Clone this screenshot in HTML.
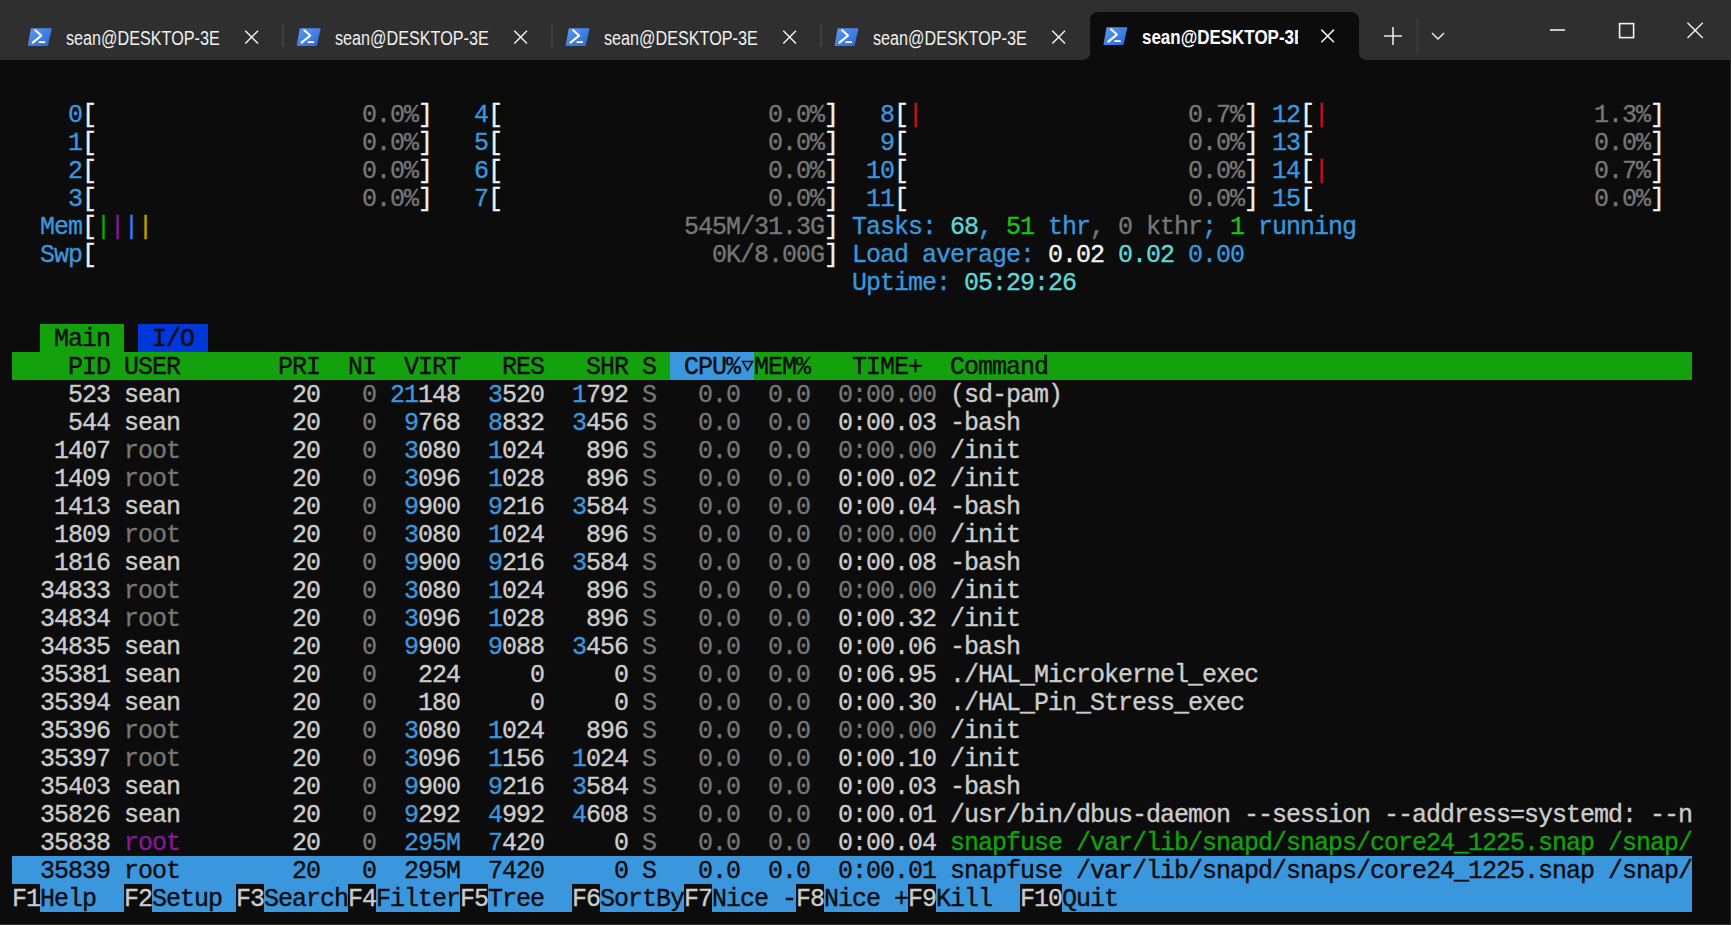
<!DOCTYPE html>
<html><head><meta charset="utf-8">
<style>
html,body{margin:0;padding:0;width:1731px;height:925px;overflow:hidden;background:#0c0c0c;}
#bar{position:absolute;left:0;top:0;width:1731px;height:60px;background:#2f2f2f;}
.ico{position:absolute;top:27px;width:26px;height:20px;}
.tt{position:absolute;top:24px;height:28px;line-height:28px;font-family:"Liberation Sans",sans-serif;font-size:19.5px;color:#f0f0f0;white-space:pre;transform:scaleX(0.83);transform-origin:0 0;}
.x{position:absolute;}
.sep{position:absolute;top:24px;width:2px;height:23px;background:#3f3f3f;}
#active{position:absolute;left:1090px;top:12px;width:269px;height:48px;background:#0c0c0c;border-radius:8px 8px 0 0;}
.f{position:absolute;height:28px;}
.t{position:absolute;height:28px;line-height:28px;font-family:"Liberation Mono",monospace;font-size:25.000px;letter-spacing:-1.0023px;white-space:pre;-webkit-text-stroke:0.35px currentColor;}
</style></head><body>
<div id="bar"></div>
<div id="active"></div>
<svg width="1731" height="60" style="position:absolute;left:0;top:0">
  <defs>
    <linearGradient id="pg" x1="0" y1="0" x2="1" y2="1">
      <stop offset="0" stop-color="#5b9bf5"/><stop offset="1" stop-color="#2a66d3"/>
    </linearGradient>
    <g id="psicon">
      <path d="M3.8 0.2 H23.6 Q24.2 0.2 24 0.9 L20.3 17.3 Q20.1 18 19.4 18 H0.7 Q0 18 0.2 17.3 L3.1 0.9 Q3.2 0.2 3.8 0.2 Z" fill="url(#pg)"/>
      <path d="M7.7 2.2 L13.6 7.6 L5 14.6" fill="none" stroke="#fff" stroke-width="2" stroke-linecap="round" stroke-linejoin="round"/>
      <path d="M11.8 14.1 H16.8" fill="none" stroke="#fff" stroke-width="1.8" stroke-linecap="round"/>
    </g>
    <g id="xic">
      <path d="M0.3 0.3 L13 13 M13 0.3 L0.3 13" stroke="#f0f0f0" stroke-width="1.5" fill="none"/>
    </g>
  </defs>
  <path d="M1082 60 Q1090 60 1090 52 L1090 60 Z" fill="#0c0c0c"/>
  <path d="M1367 60 Q1359 60 1359 52 L1359 60 Z" fill="#0c0c0c"/>
  <use href="#psicon" x="27.7" y="28"/>
  <use href="#psicon" x="296.6" y="28"/>
  <use href="#psicon" x="565.5" y="28"/>
  <use href="#psicon" x="834.4" y="28"/>
  <use href="#psicon" x="1103.3" y="27"/>
  <use href="#xic" x="245" y="30.5"/>
  <use href="#xic" x="514" y="30.5"/>
  <use href="#xic" x="783" y="30.5"/>
  <use href="#xic" x="1052" y="30.5"/>
  <use href="#xic" x="1321" y="29.3"/>
  <path d="M1393 27 V45 M1384 36 H1402" stroke="#e8e8e8" stroke-width="1.6" fill="none"/>
  <rect x="1416.6" y="18" width="1.8" height="35" fill="#3f3f3f"/>
  <path d="M1432 33 L1438 39 L1444 33" stroke="#e8e8e8" stroke-width="1.5" fill="none"/>
  <path d="M1550 30 H1565" stroke="#f0f0f0" stroke-width="1.6" fill="none"/>
  <rect x="1619.6" y="23.6" width="14" height="14" stroke="#f0f0f0" stroke-width="1.6" fill="none"/>
  <path d="M1687.5 22.7 L1702.8 38 M1702.8 22.7 L1687.5 38" stroke="#f0f0f0" stroke-width="1.4" fill="none"/>
</svg>
<div class="sep" style="left:282px"></div>
<div class="sep" style="left:551px"></div>
<div class="sep" style="left:820px"></div>
<div class="tt" style="left:66px">sean@DESKTOP-3E</div>
<div class="tt" style="left:335px">sean@DESKTOP-3E</div>
<div class="tt" style="left:604px">sean@DESKTOP-3E</div>
<div class="tt" style="left:873px">sean@DESKTOP-3E</div>
<div style="position:absolute;left:1142px;top:0;width:156px;height:60px;overflow:hidden"><div class="tt" style="left:0;top:23px;font-weight:bold;color:#fff;transform:scaleX(0.87)">sean@DESKTOP-3E</div></div>
<div class="f" style="top:324px;left:40px;width:84px;background:#13a10e"></div>
<div class="f" style="top:324px;left:138px;width:70px;background:#0037da"></div>
<div class="f" style="top:352px;left:12px;width:1680px;background:#13a10e"></div>
<div class="f" style="top:352px;left:670px;width:84px;background:#3a96dd"></div>
<div class="f" style="top:856px;left:12px;width:1680px;background:#3a96dd"></div>
<div class="f" style="top:884px;left:12px;width:1680px;background:#3a96dd"></div>
<div class="f" style="top:884px;left:12px;width:28px;background:#0c0c0c"></div>
<div class="f" style="top:884px;left:124px;width:28px;background:#0c0c0c"></div>
<div class="f" style="top:884px;left:236px;width:28px;background:#0c0c0c"></div>
<div class="f" style="top:884px;left:348px;width:28px;background:#0c0c0c"></div>
<div class="f" style="top:884px;left:460px;width:28px;background:#0c0c0c"></div>
<div class="f" style="top:884px;left:572px;width:28px;background:#0c0c0c"></div>
<div class="f" style="top:884px;left:684px;width:28px;background:#0c0c0c"></div>
<div class="f" style="top:884px;left:796px;width:28px;background:#0c0c0c"></div>
<div class="f" style="top:884px;left:908px;width:28px;background:#0c0c0c"></div>
<div class="f" style="top:884px;left:1020px;width:42px;background:#0c0c0c"></div>
<span class="t" style="top:102px;left:40px;color:#3a96dd">  0</span>
<span class="t" style="top:102px;left:82px;color:#f2f2f2">[</span>
<span class="t" style="top:102px;left:362px;color:#767676">0.0%</span>
<span class="t" style="top:102px;left:418px;color:#f2f2f2">]</span>
<span class="t" style="top:102px;left:446px;color:#3a96dd">  4</span>
<span class="t" style="top:102px;left:488px;color:#f2f2f2">[</span>
<span class="t" style="top:102px;left:768px;color:#767676">0.0%</span>
<span class="t" style="top:102px;left:824px;color:#f2f2f2">]</span>
<span class="t" style="top:102px;left:852px;color:#3a96dd">  8</span>
<span class="t" style="top:102px;left:894px;color:#f2f2f2">[</span>
<span class="t" style="top:102px;left:1188px;color:#767676">0.7%</span>
<span class="t" style="top:102px;left:1244px;color:#f2f2f2">]</span>
<span class="t" style="top:102px;left:908px;color:#c50f1f">|</span>
<span class="t" style="top:102px;left:1258px;color:#3a96dd"> 12</span>
<span class="t" style="top:102px;left:1300px;color:#f2f2f2">[</span>
<span class="t" style="top:102px;left:1594px;color:#767676">1.3%</span>
<span class="t" style="top:102px;left:1650px;color:#f2f2f2">]</span>
<span class="t" style="top:102px;left:1314px;color:#c50f1f">|</span>
<span class="t" style="top:130px;left:40px;color:#3a96dd">  1</span>
<span class="t" style="top:130px;left:82px;color:#f2f2f2">[</span>
<span class="t" style="top:130px;left:362px;color:#767676">0.0%</span>
<span class="t" style="top:130px;left:418px;color:#f2f2f2">]</span>
<span class="t" style="top:130px;left:446px;color:#3a96dd">  5</span>
<span class="t" style="top:130px;left:488px;color:#f2f2f2">[</span>
<span class="t" style="top:130px;left:768px;color:#767676">0.0%</span>
<span class="t" style="top:130px;left:824px;color:#f2f2f2">]</span>
<span class="t" style="top:130px;left:852px;color:#3a96dd">  9</span>
<span class="t" style="top:130px;left:894px;color:#f2f2f2">[</span>
<span class="t" style="top:130px;left:1188px;color:#767676">0.0%</span>
<span class="t" style="top:130px;left:1244px;color:#f2f2f2">]</span>
<span class="t" style="top:130px;left:1258px;color:#3a96dd"> 13</span>
<span class="t" style="top:130px;left:1300px;color:#f2f2f2">[</span>
<span class="t" style="top:130px;left:1594px;color:#767676">0.0%</span>
<span class="t" style="top:130px;left:1650px;color:#f2f2f2">]</span>
<span class="t" style="top:158px;left:40px;color:#3a96dd">  2</span>
<span class="t" style="top:158px;left:82px;color:#f2f2f2">[</span>
<span class="t" style="top:158px;left:362px;color:#767676">0.0%</span>
<span class="t" style="top:158px;left:418px;color:#f2f2f2">]</span>
<span class="t" style="top:158px;left:446px;color:#3a96dd">  6</span>
<span class="t" style="top:158px;left:488px;color:#f2f2f2">[</span>
<span class="t" style="top:158px;left:768px;color:#767676">0.0%</span>
<span class="t" style="top:158px;left:824px;color:#f2f2f2">]</span>
<span class="t" style="top:158px;left:852px;color:#3a96dd"> 10</span>
<span class="t" style="top:158px;left:894px;color:#f2f2f2">[</span>
<span class="t" style="top:158px;left:1188px;color:#767676">0.0%</span>
<span class="t" style="top:158px;left:1244px;color:#f2f2f2">]</span>
<span class="t" style="top:158px;left:1258px;color:#3a96dd"> 14</span>
<span class="t" style="top:158px;left:1300px;color:#f2f2f2">[</span>
<span class="t" style="top:158px;left:1594px;color:#767676">0.7%</span>
<span class="t" style="top:158px;left:1650px;color:#f2f2f2">]</span>
<span class="t" style="top:158px;left:1314px;color:#c50f1f">|</span>
<span class="t" style="top:186px;left:40px;color:#3a96dd">  3</span>
<span class="t" style="top:186px;left:82px;color:#f2f2f2">[</span>
<span class="t" style="top:186px;left:362px;color:#767676">0.0%</span>
<span class="t" style="top:186px;left:418px;color:#f2f2f2">]</span>
<span class="t" style="top:186px;left:446px;color:#3a96dd">  7</span>
<span class="t" style="top:186px;left:488px;color:#f2f2f2">[</span>
<span class="t" style="top:186px;left:768px;color:#767676">0.0%</span>
<span class="t" style="top:186px;left:824px;color:#f2f2f2">]</span>
<span class="t" style="top:186px;left:852px;color:#3a96dd"> 11</span>
<span class="t" style="top:186px;left:894px;color:#f2f2f2">[</span>
<span class="t" style="top:186px;left:1188px;color:#767676">0.0%</span>
<span class="t" style="top:186px;left:1244px;color:#f2f2f2">]</span>
<span class="t" style="top:186px;left:1258px;color:#3a96dd"> 15</span>
<span class="t" style="top:186px;left:1300px;color:#f2f2f2">[</span>
<span class="t" style="top:186px;left:1594px;color:#767676">0.0%</span>
<span class="t" style="top:186px;left:1650px;color:#f2f2f2">]</span>
<span class="t" style="top:214px;left:40px;color:#3a96dd">Mem</span>
<span class="t" style="top:214px;left:82px;color:#f2f2f2">[</span>
<span class="t" style="top:214px;left:96px;color:#13a10e">|</span>
<span class="t" style="top:214px;left:110px;color:#881798">|</span>
<span class="t" style="top:214px;left:124px;color:#3b78ff">|</span>
<span class="t" style="top:214px;left:138px;color:#c19c00">|</span>
<span class="t" style="top:214px;left:684px;color:#767676">545M/31.3G</span>
<span class="t" style="top:214px;left:824px;color:#f2f2f2">]</span>
<span class="t" style="top:214px;left:852px;color:#3a96dd">Tasks: </span>
<span class="t" style="top:214px;left:950px;color:#61d6d6">68</span>
<span class="t" style="top:214px;left:978px;color:#3a96dd">, </span>
<span class="t" style="top:214px;left:1006px;color:#16c60c">51</span>
<span class="t" style="top:214px;left:1034px;color:#3a96dd"> thr</span>
<span class="t" style="top:214px;left:1090px;color:#767676">, </span>
<span class="t" style="top:214px;left:1118px;color:#767676">0 kthr</span>
<span class="t" style="top:214px;left:1202px;color:#3a96dd">; </span>
<span class="t" style="top:214px;left:1230px;color:#16c60c">1</span>
<span class="t" style="top:214px;left:1244px;color:#3a96dd"> running</span>
<span class="t" style="top:242px;left:40px;color:#3a96dd">Swp</span>
<span class="t" style="top:242px;left:82px;color:#f2f2f2">[</span>
<span class="t" style="top:242px;left:712px;color:#767676">0K/8.00G</span>
<span class="t" style="top:242px;left:824px;color:#f2f2f2">]</span>
<span class="t" style="top:242px;left:852px;color:#3a96dd">Load average: </span>
<span class="t" style="top:242px;left:1048px;color:#f2f2f2">0.02 </span>
<span class="t" style="top:242px;left:1118px;color:#61d6d6">0.02 </span>
<span class="t" style="top:242px;left:1188px;color:#3a96dd">0.00</span>
<span class="t" style="top:270px;left:852px;color:#3a96dd">Uptime: </span>
<span class="t" style="top:270px;left:964px;color:#61d6d6">05:29:26</span>
<span class="t" style="top:326px;left:54px;color:#0c0c0c">Main</span>
<span class="t" style="top:326px;left:152px;color:#0c0c0c">I/O</span>
<span class="t" style="top:354px;left:68px;color:#0c0c0c">PID</span>
<span class="t" style="top:354px;left:124px;color:#0c0c0c">USER</span>
<span class="t" style="top:354px;left:278px;color:#0c0c0c">PRI</span>
<span class="t" style="top:354px;left:348px;color:#0c0c0c">NI</span>
<span class="t" style="top:354px;left:404px;color:#0c0c0c">VIRT</span>
<span class="t" style="top:354px;left:502px;color:#0c0c0c">RES</span>
<span class="t" style="top:354px;left:586px;color:#0c0c0c">SHR</span>
<span class="t" style="top:354px;left:642px;color:#0c0c0c">S</span>
<span class="t" style="top:354px;left:684px;color:#0c0c0c">CPU%</span>
<span class="t" style="top:354px;left:754px;color:#0c0c0c">MEM%</span>
<span class="t" style="top:354px;left:852px;color:#0c0c0c">TIME+</span>
<span class="t" style="top:354px;left:950px;color:#0c0c0c">Command</span>
<span class="t" style="top:382px;left:68px;color:#cccccc">523</span>
<span class="t" style="top:382px;left:124px;color:#cccccc">sean</span>
<span class="t" style="top:382px;left:292px;color:#cccccc">20</span>
<span class="t" style="top:382px;left:362px;color:#767676">0</span>
<span class="t" style="top:382px;left:390px;color:#3a96dd">21</span>
<span class="t" style="top:382px;left:418px;color:#cccccc">148</span>
<span class="t" style="top:382px;left:488px;color:#3a96dd">3</span>
<span class="t" style="top:382px;left:502px;color:#cccccc">520</span>
<span class="t" style="top:382px;left:572px;color:#3a96dd">1</span>
<span class="t" style="top:382px;left:586px;color:#cccccc">792</span>
<span class="t" style="top:382px;left:642px;color:#767676">S</span>
<span class="t" style="top:382px;left:698px;color:#767676">0.0</span>
<span class="t" style="top:382px;left:768px;color:#767676">0.0</span>
<span class="t" style="top:382px;left:838px;color:#767676">0:00.00</span>
<span class="t" style="top:382px;left:950px;color:#cccccc">(sd-pam)</span>
<span class="t" style="top:410px;left:68px;color:#cccccc">544</span>
<span class="t" style="top:410px;left:124px;color:#cccccc">sean</span>
<span class="t" style="top:410px;left:292px;color:#cccccc">20</span>
<span class="t" style="top:410px;left:362px;color:#767676">0</span>
<span class="t" style="top:410px;left:404px;color:#3a96dd">9</span>
<span class="t" style="top:410px;left:418px;color:#cccccc">768</span>
<span class="t" style="top:410px;left:488px;color:#3a96dd">8</span>
<span class="t" style="top:410px;left:502px;color:#cccccc">832</span>
<span class="t" style="top:410px;left:572px;color:#3a96dd">3</span>
<span class="t" style="top:410px;left:586px;color:#cccccc">456</span>
<span class="t" style="top:410px;left:642px;color:#767676">S</span>
<span class="t" style="top:410px;left:698px;color:#767676">0.0</span>
<span class="t" style="top:410px;left:768px;color:#767676">0.0</span>
<span class="t" style="top:410px;left:838px;color:#cccccc">0:00.03</span>
<span class="t" style="top:410px;left:950px;color:#cccccc">-bash</span>
<span class="t" style="top:438px;left:54px;color:#cccccc">1407</span>
<span class="t" style="top:438px;left:124px;color:#767676">root</span>
<span class="t" style="top:438px;left:292px;color:#cccccc">20</span>
<span class="t" style="top:438px;left:362px;color:#767676">0</span>
<span class="t" style="top:438px;left:404px;color:#3a96dd">3</span>
<span class="t" style="top:438px;left:418px;color:#cccccc">080</span>
<span class="t" style="top:438px;left:488px;color:#3a96dd">1</span>
<span class="t" style="top:438px;left:502px;color:#cccccc">024</span>
<span class="t" style="top:438px;left:586px;color:#cccccc">896</span>
<span class="t" style="top:438px;left:642px;color:#767676">S</span>
<span class="t" style="top:438px;left:698px;color:#767676">0.0</span>
<span class="t" style="top:438px;left:768px;color:#767676">0.0</span>
<span class="t" style="top:438px;left:838px;color:#767676">0:00.00</span>
<span class="t" style="top:438px;left:950px;color:#cccccc">/init</span>
<span class="t" style="top:466px;left:54px;color:#cccccc">1409</span>
<span class="t" style="top:466px;left:124px;color:#767676">root</span>
<span class="t" style="top:466px;left:292px;color:#cccccc">20</span>
<span class="t" style="top:466px;left:362px;color:#767676">0</span>
<span class="t" style="top:466px;left:404px;color:#3a96dd">3</span>
<span class="t" style="top:466px;left:418px;color:#cccccc">096</span>
<span class="t" style="top:466px;left:488px;color:#3a96dd">1</span>
<span class="t" style="top:466px;left:502px;color:#cccccc">028</span>
<span class="t" style="top:466px;left:586px;color:#cccccc">896</span>
<span class="t" style="top:466px;left:642px;color:#767676">S</span>
<span class="t" style="top:466px;left:698px;color:#767676">0.0</span>
<span class="t" style="top:466px;left:768px;color:#767676">0.0</span>
<span class="t" style="top:466px;left:838px;color:#cccccc">0:00.02</span>
<span class="t" style="top:466px;left:950px;color:#cccccc">/init</span>
<span class="t" style="top:494px;left:54px;color:#cccccc">1413</span>
<span class="t" style="top:494px;left:124px;color:#cccccc">sean</span>
<span class="t" style="top:494px;left:292px;color:#cccccc">20</span>
<span class="t" style="top:494px;left:362px;color:#767676">0</span>
<span class="t" style="top:494px;left:404px;color:#3a96dd">9</span>
<span class="t" style="top:494px;left:418px;color:#cccccc">900</span>
<span class="t" style="top:494px;left:488px;color:#3a96dd">9</span>
<span class="t" style="top:494px;left:502px;color:#cccccc">216</span>
<span class="t" style="top:494px;left:572px;color:#3a96dd">3</span>
<span class="t" style="top:494px;left:586px;color:#cccccc">584</span>
<span class="t" style="top:494px;left:642px;color:#767676">S</span>
<span class="t" style="top:494px;left:698px;color:#767676">0.0</span>
<span class="t" style="top:494px;left:768px;color:#767676">0.0</span>
<span class="t" style="top:494px;left:838px;color:#cccccc">0:00.04</span>
<span class="t" style="top:494px;left:950px;color:#cccccc">-bash</span>
<span class="t" style="top:522px;left:54px;color:#cccccc">1809</span>
<span class="t" style="top:522px;left:124px;color:#767676">root</span>
<span class="t" style="top:522px;left:292px;color:#cccccc">20</span>
<span class="t" style="top:522px;left:362px;color:#767676">0</span>
<span class="t" style="top:522px;left:404px;color:#3a96dd">3</span>
<span class="t" style="top:522px;left:418px;color:#cccccc">080</span>
<span class="t" style="top:522px;left:488px;color:#3a96dd">1</span>
<span class="t" style="top:522px;left:502px;color:#cccccc">024</span>
<span class="t" style="top:522px;left:586px;color:#cccccc">896</span>
<span class="t" style="top:522px;left:642px;color:#767676">S</span>
<span class="t" style="top:522px;left:698px;color:#767676">0.0</span>
<span class="t" style="top:522px;left:768px;color:#767676">0.0</span>
<span class="t" style="top:522px;left:838px;color:#767676">0:00.00</span>
<span class="t" style="top:522px;left:950px;color:#cccccc">/init</span>
<span class="t" style="top:550px;left:54px;color:#cccccc">1816</span>
<span class="t" style="top:550px;left:124px;color:#cccccc">sean</span>
<span class="t" style="top:550px;left:292px;color:#cccccc">20</span>
<span class="t" style="top:550px;left:362px;color:#767676">0</span>
<span class="t" style="top:550px;left:404px;color:#3a96dd">9</span>
<span class="t" style="top:550px;left:418px;color:#cccccc">900</span>
<span class="t" style="top:550px;left:488px;color:#3a96dd">9</span>
<span class="t" style="top:550px;left:502px;color:#cccccc">216</span>
<span class="t" style="top:550px;left:572px;color:#3a96dd">3</span>
<span class="t" style="top:550px;left:586px;color:#cccccc">584</span>
<span class="t" style="top:550px;left:642px;color:#767676">S</span>
<span class="t" style="top:550px;left:698px;color:#767676">0.0</span>
<span class="t" style="top:550px;left:768px;color:#767676">0.0</span>
<span class="t" style="top:550px;left:838px;color:#cccccc">0:00.08</span>
<span class="t" style="top:550px;left:950px;color:#cccccc">-bash</span>
<span class="t" style="top:578px;left:40px;color:#cccccc">34833</span>
<span class="t" style="top:578px;left:124px;color:#767676">root</span>
<span class="t" style="top:578px;left:292px;color:#cccccc">20</span>
<span class="t" style="top:578px;left:362px;color:#767676">0</span>
<span class="t" style="top:578px;left:404px;color:#3a96dd">3</span>
<span class="t" style="top:578px;left:418px;color:#cccccc">080</span>
<span class="t" style="top:578px;left:488px;color:#3a96dd">1</span>
<span class="t" style="top:578px;left:502px;color:#cccccc">024</span>
<span class="t" style="top:578px;left:586px;color:#cccccc">896</span>
<span class="t" style="top:578px;left:642px;color:#767676">S</span>
<span class="t" style="top:578px;left:698px;color:#767676">0.0</span>
<span class="t" style="top:578px;left:768px;color:#767676">0.0</span>
<span class="t" style="top:578px;left:838px;color:#767676">0:00.00</span>
<span class="t" style="top:578px;left:950px;color:#cccccc">/init</span>
<span class="t" style="top:606px;left:40px;color:#cccccc">34834</span>
<span class="t" style="top:606px;left:124px;color:#767676">root</span>
<span class="t" style="top:606px;left:292px;color:#cccccc">20</span>
<span class="t" style="top:606px;left:362px;color:#767676">0</span>
<span class="t" style="top:606px;left:404px;color:#3a96dd">3</span>
<span class="t" style="top:606px;left:418px;color:#cccccc">096</span>
<span class="t" style="top:606px;left:488px;color:#3a96dd">1</span>
<span class="t" style="top:606px;left:502px;color:#cccccc">028</span>
<span class="t" style="top:606px;left:586px;color:#cccccc">896</span>
<span class="t" style="top:606px;left:642px;color:#767676">S</span>
<span class="t" style="top:606px;left:698px;color:#767676">0.0</span>
<span class="t" style="top:606px;left:768px;color:#767676">0.0</span>
<span class="t" style="top:606px;left:838px;color:#cccccc">0:00.32</span>
<span class="t" style="top:606px;left:950px;color:#cccccc">/init</span>
<span class="t" style="top:634px;left:40px;color:#cccccc">34835</span>
<span class="t" style="top:634px;left:124px;color:#cccccc">sean</span>
<span class="t" style="top:634px;left:292px;color:#cccccc">20</span>
<span class="t" style="top:634px;left:362px;color:#767676">0</span>
<span class="t" style="top:634px;left:404px;color:#3a96dd">9</span>
<span class="t" style="top:634px;left:418px;color:#cccccc">900</span>
<span class="t" style="top:634px;left:488px;color:#3a96dd">9</span>
<span class="t" style="top:634px;left:502px;color:#cccccc">088</span>
<span class="t" style="top:634px;left:572px;color:#3a96dd">3</span>
<span class="t" style="top:634px;left:586px;color:#cccccc">456</span>
<span class="t" style="top:634px;left:642px;color:#767676">S</span>
<span class="t" style="top:634px;left:698px;color:#767676">0.0</span>
<span class="t" style="top:634px;left:768px;color:#767676">0.0</span>
<span class="t" style="top:634px;left:838px;color:#cccccc">0:00.06</span>
<span class="t" style="top:634px;left:950px;color:#cccccc">-bash</span>
<span class="t" style="top:662px;left:40px;color:#cccccc">35381</span>
<span class="t" style="top:662px;left:124px;color:#cccccc">sean</span>
<span class="t" style="top:662px;left:292px;color:#cccccc">20</span>
<span class="t" style="top:662px;left:362px;color:#767676">0</span>
<span class="t" style="top:662px;left:418px;color:#cccccc">224</span>
<span class="t" style="top:662px;left:530px;color:#cccccc">0</span>
<span class="t" style="top:662px;left:614px;color:#cccccc">0</span>
<span class="t" style="top:662px;left:642px;color:#767676">S</span>
<span class="t" style="top:662px;left:698px;color:#767676">0.0</span>
<span class="t" style="top:662px;left:768px;color:#767676">0.0</span>
<span class="t" style="top:662px;left:838px;color:#cccccc">0:06.95</span>
<span class="t" style="top:662px;left:950px;color:#cccccc">./HAL_Microkernel_exec</span>
<span class="t" style="top:690px;left:40px;color:#cccccc">35394</span>
<span class="t" style="top:690px;left:124px;color:#cccccc">sean</span>
<span class="t" style="top:690px;left:292px;color:#cccccc">20</span>
<span class="t" style="top:690px;left:362px;color:#767676">0</span>
<span class="t" style="top:690px;left:418px;color:#cccccc">180</span>
<span class="t" style="top:690px;left:530px;color:#cccccc">0</span>
<span class="t" style="top:690px;left:614px;color:#cccccc">0</span>
<span class="t" style="top:690px;left:642px;color:#767676">S</span>
<span class="t" style="top:690px;left:698px;color:#767676">0.0</span>
<span class="t" style="top:690px;left:768px;color:#767676">0.0</span>
<span class="t" style="top:690px;left:838px;color:#cccccc">0:00.30</span>
<span class="t" style="top:690px;left:950px;color:#cccccc">./HAL_Pin_Stress_exec</span>
<span class="t" style="top:718px;left:40px;color:#cccccc">35396</span>
<span class="t" style="top:718px;left:124px;color:#767676">root</span>
<span class="t" style="top:718px;left:292px;color:#cccccc">20</span>
<span class="t" style="top:718px;left:362px;color:#767676">0</span>
<span class="t" style="top:718px;left:404px;color:#3a96dd">3</span>
<span class="t" style="top:718px;left:418px;color:#cccccc">080</span>
<span class="t" style="top:718px;left:488px;color:#3a96dd">1</span>
<span class="t" style="top:718px;left:502px;color:#cccccc">024</span>
<span class="t" style="top:718px;left:586px;color:#cccccc">896</span>
<span class="t" style="top:718px;left:642px;color:#767676">S</span>
<span class="t" style="top:718px;left:698px;color:#767676">0.0</span>
<span class="t" style="top:718px;left:768px;color:#767676">0.0</span>
<span class="t" style="top:718px;left:838px;color:#767676">0:00.00</span>
<span class="t" style="top:718px;left:950px;color:#cccccc">/init</span>
<span class="t" style="top:746px;left:40px;color:#cccccc">35397</span>
<span class="t" style="top:746px;left:124px;color:#767676">root</span>
<span class="t" style="top:746px;left:292px;color:#cccccc">20</span>
<span class="t" style="top:746px;left:362px;color:#767676">0</span>
<span class="t" style="top:746px;left:404px;color:#3a96dd">3</span>
<span class="t" style="top:746px;left:418px;color:#cccccc">096</span>
<span class="t" style="top:746px;left:488px;color:#3a96dd">1</span>
<span class="t" style="top:746px;left:502px;color:#cccccc">156</span>
<span class="t" style="top:746px;left:572px;color:#3a96dd">1</span>
<span class="t" style="top:746px;left:586px;color:#cccccc">024</span>
<span class="t" style="top:746px;left:642px;color:#767676">S</span>
<span class="t" style="top:746px;left:698px;color:#767676">0.0</span>
<span class="t" style="top:746px;left:768px;color:#767676">0.0</span>
<span class="t" style="top:746px;left:838px;color:#cccccc">0:00.10</span>
<span class="t" style="top:746px;left:950px;color:#cccccc">/init</span>
<span class="t" style="top:774px;left:40px;color:#cccccc">35403</span>
<span class="t" style="top:774px;left:124px;color:#cccccc">sean</span>
<span class="t" style="top:774px;left:292px;color:#cccccc">20</span>
<span class="t" style="top:774px;left:362px;color:#767676">0</span>
<span class="t" style="top:774px;left:404px;color:#3a96dd">9</span>
<span class="t" style="top:774px;left:418px;color:#cccccc">900</span>
<span class="t" style="top:774px;left:488px;color:#3a96dd">9</span>
<span class="t" style="top:774px;left:502px;color:#cccccc">216</span>
<span class="t" style="top:774px;left:572px;color:#3a96dd">3</span>
<span class="t" style="top:774px;left:586px;color:#cccccc">584</span>
<span class="t" style="top:774px;left:642px;color:#767676">S</span>
<span class="t" style="top:774px;left:698px;color:#767676">0.0</span>
<span class="t" style="top:774px;left:768px;color:#767676">0.0</span>
<span class="t" style="top:774px;left:838px;color:#cccccc">0:00.03</span>
<span class="t" style="top:774px;left:950px;color:#cccccc">-bash</span>
<span class="t" style="top:802px;left:40px;color:#cccccc">35826</span>
<span class="t" style="top:802px;left:124px;color:#cccccc">sean</span>
<span class="t" style="top:802px;left:292px;color:#cccccc">20</span>
<span class="t" style="top:802px;left:362px;color:#767676">0</span>
<span class="t" style="top:802px;left:404px;color:#3a96dd">9</span>
<span class="t" style="top:802px;left:418px;color:#cccccc">292</span>
<span class="t" style="top:802px;left:488px;color:#3a96dd">4</span>
<span class="t" style="top:802px;left:502px;color:#cccccc">992</span>
<span class="t" style="top:802px;left:572px;color:#3a96dd">4</span>
<span class="t" style="top:802px;left:586px;color:#cccccc">608</span>
<span class="t" style="top:802px;left:642px;color:#767676">S</span>
<span class="t" style="top:802px;left:698px;color:#767676">0.0</span>
<span class="t" style="top:802px;left:768px;color:#767676">0.0</span>
<span class="t" style="top:802px;left:838px;color:#cccccc">0:00.01</span>
<span class="t" style="top:802px;left:950px;color:#cccccc">/usr/bin/dbus-daemon --session --address=systemd: --n</span>
<span class="t" style="top:830px;left:40px;color:#cccccc">35838</span>
<span class="t" style="top:830px;left:124px;color:#881798">root</span>
<span class="t" style="top:830px;left:292px;color:#cccccc">20</span>
<span class="t" style="top:830px;left:362px;color:#767676">0</span>
<span class="t" style="top:830px;left:404px;color:#3a96dd">295M</span>
<span class="t" style="top:830px;left:488px;color:#3a96dd">7</span>
<span class="t" style="top:830px;left:502px;color:#cccccc">420</span>
<span class="t" style="top:830px;left:614px;color:#cccccc">0</span>
<span class="t" style="top:830px;left:642px;color:#767676">S</span>
<span class="t" style="top:830px;left:698px;color:#767676">0.0</span>
<span class="t" style="top:830px;left:768px;color:#767676">0.0</span>
<span class="t" style="top:830px;left:838px;color:#cccccc">0:00.04</span>
<span class="t" style="top:830px;left:950px;color:#13a10e">snapfuse /var/lib/snapd/snaps/core24_1225.snap /snap/</span>
<span class="t" style="top:858px;left:40px;color:#0c0c0c">35839</span>
<span class="t" style="top:858px;left:124px;color:#0c0c0c">root</span>
<span class="t" style="top:858px;left:292px;color:#0c0c0c">20</span>
<span class="t" style="top:858px;left:362px;color:#0c0c0c">0</span>
<span class="t" style="top:858px;left:404px;color:#0c0c0c">295M</span>
<span class="t" style="top:858px;left:488px;color:#0c0c0c">7420</span>
<span class="t" style="top:858px;left:614px;color:#0c0c0c">0</span>
<span class="t" style="top:858px;left:642px;color:#0c0c0c">S</span>
<span class="t" style="top:858px;left:698px;color:#0c0c0c">0.0</span>
<span class="t" style="top:858px;left:768px;color:#0c0c0c">0.0</span>
<span class="t" style="top:858px;left:838px;color:#0c0c0c">0:00.01</span>
<span class="t" style="top:858px;left:950px;color:#0c0c0c">snapfuse /var/lib/snapd/snaps/core24_1225.snap /snap/</span>
<span class="t" style="top:886px;left:12px;color:#cccccc">F1</span>
<span class="t" style="top:886px;left:40px;color:#0c0c0c">Help  </span>
<span class="t" style="top:886px;left:124px;color:#cccccc">F2</span>
<span class="t" style="top:886px;left:152px;color:#0c0c0c">Setup </span>
<span class="t" style="top:886px;left:236px;color:#cccccc">F3</span>
<span class="t" style="top:886px;left:264px;color:#0c0c0c">Search</span>
<span class="t" style="top:886px;left:348px;color:#cccccc">F4</span>
<span class="t" style="top:886px;left:376px;color:#0c0c0c">Filter</span>
<span class="t" style="top:886px;left:460px;color:#cccccc">F5</span>
<span class="t" style="top:886px;left:488px;color:#0c0c0c">Tree  </span>
<span class="t" style="top:886px;left:572px;color:#cccccc">F6</span>
<span class="t" style="top:886px;left:600px;color:#0c0c0c">SortBy</span>
<span class="t" style="top:886px;left:684px;color:#cccccc">F7</span>
<span class="t" style="top:886px;left:712px;color:#0c0c0c">Nice -</span>
<span class="t" style="top:886px;left:796px;color:#cccccc">F8</span>
<span class="t" style="top:886px;left:824px;color:#0c0c0c">Nice +</span>
<span class="t" style="top:886px;left:908px;color:#cccccc">F9</span>
<span class="t" style="top:886px;left:936px;color:#0c0c0c">Kill  </span>
<span class="t" style="top:886px;left:1020px;color:#cccccc">F10</span>
<span class="t" style="top:886px;left:1062px;color:#0c0c0c">Quit</span>
<svg style="position:absolute;left:740px;top:358px" width="16" height="16"><path d="M2.6 3.4 H12.6 L7.6 12.2 Z" fill="none" stroke="#0c0c0c" stroke-width="1.5" stroke-linejoin="miter"/></svg>
<div style="position:absolute;left:0;top:924px;width:1731px;height:1px;background:#303030"></div>
<div style="position:absolute;left:1730px;top:60px;width:1px;height:865px;background:#2a2a2a"></div>
</body></html>
